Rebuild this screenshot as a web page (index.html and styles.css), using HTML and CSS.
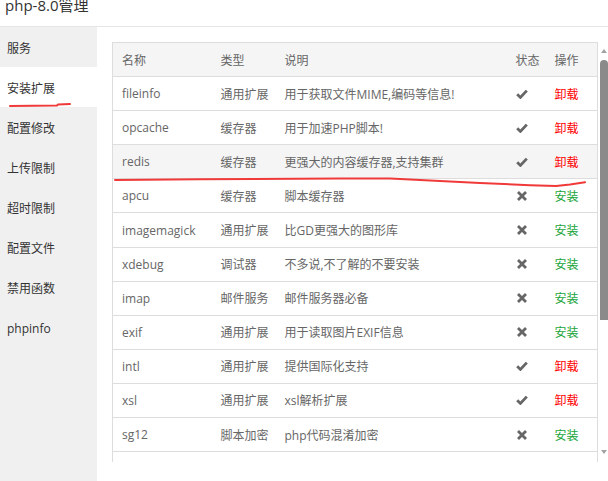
FILE: index.html
```html
<!DOCTYPE html>
<html lang="zh-CN">
<head>
  <meta charset="UTF-8">
  <title>php-8.0管理</title>
  <link rel="stylesheet" href="styles.css">
</head>
<body>
  <div class="title"><div class="title-text">php-8.0管理</div></div>

  <div class="main">
    <div class="side">
      <a>服务</a>
      <a class="on">安装扩展</a>
      <a>配置修改</a>
      <a>上传限制</a>
      <a>超时限制</a>
      <a>配置文件</a>
      <a>禁用函数</a>
      <a>phpinfo</a>
    </div>

    <div class="panel">
      <div class="tbl-wrap">
        <table class="tbl">
          <colgroup>
            <col style="width:99px">
            <col style="width:64px">
            <col>
            <col style="width:39px">
            <col style="width:52px">
          </colgroup>
          <thead>
            <tr><th>名称</th><th>类型</th><th>说明</th><th>状态</th><th>操作</th></tr>
          </thead>
          <tbody>
            <tr><td>fileinfo</td><td>通用扩展</td><td>用于获取文件MIME,编码等信息!</td><td><svg class="ok" width="12" height="10" viewBox="0 0 12 10"><path d="M1.2 5.2 L4.4 8.4 L10.8 1.6"/></svg></td><td><a class="del">卸载</a></td></tr>
            <tr><td>opcache</td><td>缓存器</td><td>用于加速PHP脚本!</td><td><svg class="ok" width="12" height="10" viewBox="0 0 12 10"><path d="M1.2 5.2 L4.4 8.4 L10.8 1.6"/></svg></td><td><a class="del">卸载</a></td></tr>
            <tr class="hover"><td>redis</td><td>缓存器</td><td>更强大的内容缓存器,支持集群</td><td><svg class="ok" width="12" height="10" viewBox="0 0 12 10"><path d="M1.2 5.2 L4.4 8.4 L10.8 1.6"/></svg></td><td><a class="del">卸载</a></td></tr>
            <tr><td>apcu</td><td>缓存器</td><td>脚本缓存器</td><td><svg class="no" width="12" height="10" viewBox="0 0 12 10"><path d="M2 1 L10 9 M10 1 L2 9"/></svg></td><td><a class="add">安装</a></td></tr>
            <tr><td>imagemagick</td><td>通用扩展</td><td>比GD更强大的图形库</td><td><svg class="no" width="12" height="10" viewBox="0 0 12 10"><path d="M2 1 L10 9 M10 1 L2 9"/></svg></td><td><a class="add">安装</a></td></tr>
            <tr><td>xdebug</td><td>调试器</td><td>不多说,不了解的不要安装</td><td><svg class="no" width="12" height="10" viewBox="0 0 12 10"><path d="M2 1 L10 9 M10 1 L2 9"/></svg></td><td><a class="add">安装</a></td></tr>
            <tr><td>imap</td><td>邮件服务</td><td>邮件服务器必备</td><td><svg class="no" width="12" height="10" viewBox="0 0 12 10"><path d="M2 1 L10 9 M10 1 L2 9"/></svg></td><td><a class="add">安装</a></td></tr>
            <tr><td>exif</td><td>通用扩展</td><td>用于读取图片EXIF信息</td><td><svg class="no" width="12" height="10" viewBox="0 0 12 10"><path d="M2 1 L10 9 M10 1 L2 9"/></svg></td><td><a class="add">安装</a></td></tr>
            <tr><td>intl</td><td>通用扩展</td><td>提供国际化支持</td><td><svg class="ok" width="12" height="10" viewBox="0 0 12 10"><path d="M1.2 5.2 L4.4 8.4 L10.8 1.6"/></svg></td><td><a class="del">卸载</a></td></tr>
            <tr><td>xsl</td><td>通用扩展</td><td>xsl解析扩展</td><td><svg class="ok" width="12" height="10" viewBox="0 0 12 10"><path d="M1.2 5.2 L4.4 8.4 L10.8 1.6"/></svg></td><td><a class="del">卸载</a></td></tr>
            <tr><td>sg12</td><td>脚本加密</td><td>php代码混淆加密</td><td><svg class="no" width="12" height="10" viewBox="0 0 12 10"><path d="M2 1 L10 9 M10 1 L2 9"/></svg></td><td><a class="add">安装</a></td></tr>
            <tr><td></td><td></td><td></td><td></td><td></td></tr>
          </tbody>
        </table>
      </div>
      <div class="scroll">
        <div class="arrow up"></div>
        <div class="thumb"></div>
        <div class="arrow down"></div>
      </div>
    </div>
  </div>

  <!-- hand-drawn marks on the screenshot -->
  <svg class="marks" width="608" height="481" viewBox="0 0 608 481">
    <path d="M10 106 L57 105.5 L58 104.5 L70 104" />
    <path d="M115 180 L200 179.2 L340 178.4 L390 178.6 L420 180 L480 183 L530 185.2 L556 186 L570 184.5 L585 182.3" />
  </svg>
</body>
</html>
```

FILE: styles.css
```css
body {
  margin: 0;
  position: relative;
  font-family: 'Open Sans', 'Noto Sans CJK SC', sans-serif;
  font-size: 12px;
  color: #666;
  background: #fff;
  overflow: hidden;
}
.title {
  height: 26px;
  border-bottom: 1px solid #e6e6e6;
  overflow: hidden;
  padding-left: 5px;
}
.title-text {
  font-size: 15px;
  line-height: 16px;
  margin-top: -3px;
  color: #333;
}
.main {
  display: flex;
  height: 454px;
}
.side {
  width: 97px;
  background: #f0f0f0;
}
.side a {
  display: block;
  height: 38px;
  padding-top: 2px;
  line-height: 40px;
  padding-left: 7px;
  color: #333;
}
.side a.on { background: #fff; }

.panel {
  flex: 1;
  display: flex;
  align-items: flex-start;
  padding: 15px 0 0 15px;
}
.tbl-wrap {
  width: 486px;
  height: 420px;
  overflow: hidden;
}
.tbl {
  width: 100%;
  table-layout: fixed;
  border-collapse: collapse;
  border: 1px solid #ddd;
}
.tbl th, .tbl td {
  height: 33.1px;
  padding: 0 0 0 9px;
  text-align: left;
  font-weight: normal;
  border-bottom: 1px solid #ddd;
  white-space: nowrap;
  overflow: hidden;
  color: #666;
}
.tbl thead tr, .tbl tr.hover { background: #f5f5f5; }
.tbl svg { display: block; fill: none; }
.tbl .ok { stroke: #666; stroke-width: 2.8; }
.tbl .no { stroke: #666; stroke-width: 2.8; }
.del { color: #f00; }
.add { color: #20a53a; }

.scroll {
  width: 10px;
  height: 420px;
  position: relative;
}
.thumb {
  position: absolute;
  left: 2px;
  top: 18px;
  width: 8px;
  height: 260px;
  background: #8a8a8a;
  border-radius: 4px 4px 0 0;
}
.arrow {
  position: absolute;
  left: 3px;
  width: 0;
  height: 0;
  border-left: 3px solid transparent;
  border-right: 3px solid transparent;
}
.arrow.up { top: 7px; border-bottom: 4px solid #a3a3a3; }
.arrow.down { top: 408px; border-top: 4px solid #a3a3a3; }

.marks {
  position: absolute;
  left: 0;
  top: 0;
  pointer-events: none;
}
.marks path {
  fill: none;
  stroke: #f03a3a;
  stroke-width: 2;
  stroke-linecap: round;
  stroke-linejoin: round;
}
```
